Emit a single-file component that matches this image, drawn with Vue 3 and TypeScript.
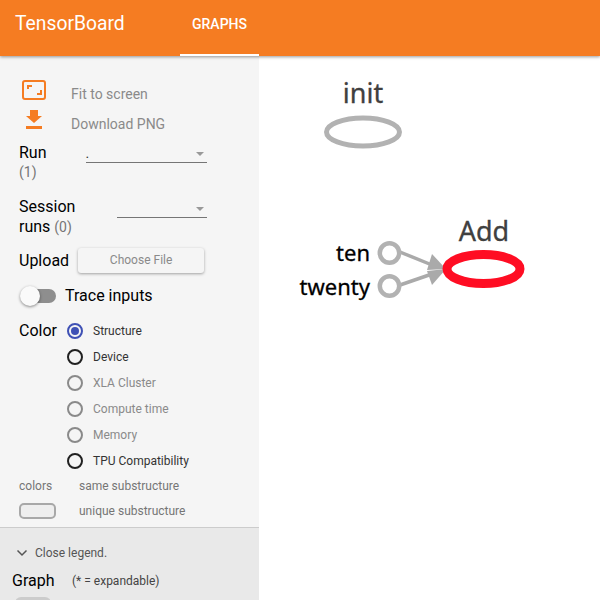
<script setup lang="ts">
interface ColorOption { label: string; state: "checked" | "on" | "off" }
const colorOptions: ColorOption[] = [
  { label: "Structure", state: "checked" },
  { label: "Device", state: "on" },
  { label: "XLA Cluster", state: "off" },
  { label: "Compute time", state: "off" },
  { label: "Memory", state: "off" },
  { label: "TPU Compatibility", state: "on" },
];
</script>

<template>
  <div class="app">
    <header class="toolbar">
      <div class="brand">TensorBoard</div>
      <div class="tab">GRAPHS</div>
    </header>
    <div class="main">
      <aside class="sidebar">
        <div class="controls">
          <div class="action">
            <svg class="ic" width="28" height="24" viewBox="0 0 28 24">
              <rect x="3" y="3" width="22" height="18" rx="2" fill="none" stroke="#f57c22" stroke-width="2" />
              <path d="M8 11V8h4M21 12v4h-4" fill="none" stroke="#f57c22" stroke-width="2" />
            </svg>
            <span>Fit to screen</span>
          </div>
          <div class="action">
            <svg class="ic" width="28" height="24" viewBox="0 0 28 24">
              <path d="M10 2h8v6h4l-8 7-8-7h4zM6 18h16v3H6z" fill="#f57c22" />
            </svg>
            <span>Download PNG</span>
          </div>
          <div class="row run">
            <div class="lbl">Run<div class="count">(1)</div></div>
            <div class="select s1"><span>.</span><i></i></div>
          </div>
          <div class="row session">
            <div class="lbl">Session<br />runs <span class="count">(0)</span></div>
            <div class="select s2"><span></span><i></i></div>
          </div>
          <div class="row upload">
            <div class="lbl">Upload</div>
            <div class="btn">Choose File</div>
          </div>
          <div class="row trace">
            <div class="toggle"><div class="track"></div><div class="knob"></div></div>
            <div class="lbl">Trace inputs</div>
          </div>
          <div class="row color">
            <div class="lbl">Color</div>
            <div class="radios">
              <div v-for="o in colorOptions" :key="o.label" class="radio" :class="o.state">
                <span class="dot"></span><span>{{ o.label }}</span>
              </div>
            </div>
          </div>
          <div class="key">
            <span class="k1">colors</span><span>same substructure</span>
          </div>
          <div class="key second">
            <span class="k1"><span class="pill"></span></span><span>unique substructure</span>
          </div>
        </div>
        <div class="legend">
          <div class="close">
            <svg width="12" height="8" viewBox="0 0 12 8"><path d="M1.500 1.500L6 6l4.500-4.500" fill="none" stroke="#555" stroke-width="1.500" /></svg>
            <span>Close legend.</span>
          </div>
          <div class="ghead"><span class="g">Graph</span><span class="exp">(* = expandable)</span></div>
          <div class="stub"></div>
        </div>
      </aside>
      <div class="canvas">
        <svg width="341" height="544" viewBox="259 56 341 544">
          <g text-anchor="middle">
            <text x="363" y="103" class="big">init</text>
            <text x="484" y="241" class="big">Add</text>
          </g>
          <ellipse cx="363" cy="132" rx="36.500" ry="14" fill="#fff" stroke="#b2b2b2" stroke-width="5" />
          <text x="370" y="261" text-anchor="end" class="small">ten</text>
          <text x="370" y="295" text-anchor="end" class="small">twenty</text>
          <line x1="400" y1="252" x2="432" y2="265" stroke="#aaa" stroke-width="3.500" />
          <line x1="400" y1="285" x2="432" y2="274" stroke="#aaa" stroke-width="3.500" />
          <path d="M432 254L446 269 427 270z" fill="#aaa" />
          <path d="M427 271L446 269 432 285z" fill="#aaa" />
          <circle cx="389.500" cy="253" r="9.700" fill="#fff" stroke="#b2b2b2" stroke-width="4.500" />
          <circle cx="389.500" cy="286" r="9.700" fill="#fff" stroke="#b2b2b2" stroke-width="4.500" />
          <ellipse cx="483.500" cy="269" rx="36.500" ry="14.500" fill="#fff" stroke="#ff0d23" stroke-width="9" />
        </svg>
      </div>
    </div>
  </div>
</template>

<style>
html, body { margin: 0; overflow: hidden; }
</style>

<style scoped>
.app { width: 600px; height: 600px; display: flex; flex-direction: column; overflow: hidden;
  font-family: Roboto, "Liberation Sans", sans-serif; background: #fff; }
.toolbar { flex: none; height: 56px; background: #f57c22; color: #fff; display: flex; align-items: stretch;
  box-shadow: 0 1px 3px rgba(0, 0, 0, 0.4); position: relative; z-index: 2; }
.brand { font-size: 19.300px; line-height: 48px; margin-left: 15px; width: 165px; }
.tab { width: 79px; box-sizing: border-box; text-align: center; font-size: 14px; font-weight: 500; line-height: 49px;
  border-bottom: 2px solid #fff; }
.main { flex: 1; min-height: 0; display: flex; }
.sidebar { flex: none; width: 259px; background: #f5f5f5; display: flex; flex-direction: column; overflow: hidden; }
.controls { flex: 1; padding: 23px 0 0 19px; box-sizing: border-box; }
.action { display: flex; align-items: center; height: 30px; font-size: 14px; color: #8a8a8a; }
.action .ic { position: relative; top: -4px; margin-left: 1px; margin-right: 23px; flex: none; }
.row { display: flex; font-size: 16px; color: #000; }
.lbl { line-height: 20px; }
.count { font-size: 14px; color: #757575; }
.run { margin-top: 4px; height: 46px; }
.run .count { line-height: 19px; }
.select { border-bottom: 1px solid #757575; position: relative; font-size: 14px; color: #333; }
.select i { position: absolute; right: 3px; bottom: 6px; border: 4px solid transparent; border-top: 4px solid #999; border-bottom: none; }
.s1 { width: 121px; height: 18px; margin-left: 39px; line-height: 18px; margin-top: 1px; }
.s2 { width: 90px; height: 20px; margin-left: 42px; }
.session { margin-top: 8px; }
.upload { margin-top: 11px; align-items: center; }
.btn { width: 126px; height: 25px; line-height: 25px; margin-left: 9px; text-align: center; background: #f5f5f5;
  border-radius: 3px; font-size: 12px; color: #8a8a8a; box-shadow: 0 1px 3px rgba(0, 0, 0, 0.35); }
.trace { margin-top: 11px; align-items: center; height: 24px; }
.toggle { width: 37px; height: 20px; position: relative; margin-right: 9px; flex: none; }
.track { position: absolute; left: 2px; right: 0; top: 3px; height: 14px; border-radius: 7px; background: #8e8e8e; }
.knob { position: absolute; left: 1px; top: 0; width: 20px; height: 20px; border-radius: 50%; background: #fafafa;
  box-shadow: 0 1px 3px rgba(0, 0, 0, 0.45); }
.color { margin-top: 12px; }
.color > .lbl { width: 48px; line-height: 22px; }
.radio { display: flex; align-items: center; height: 26px; font-size: 12px; color: #333; }
.radio .dot { width: 12px; height: 12px; border: 2px solid #212121; border-radius: 50%; margin-right: 10px; position: relative; flex: none; }
.radio.off { color: #8a8a8a; }
.radio.off .dot { border-color: #8a8a8a; }
.radio.checked .dot { border-color: #3f51b5; }
.radio.checked .dot::after { content: ""; position: absolute; inset: 2px; border-radius: 50%; background: #3f51b5; }
.radios { margin-top: -2px; }
.key { display: flex; font-size: 12px; color: #757575; line-height: 14px; margin-top: 5px; }
.key.second { margin-top: 10px; align-items: center; }
.k1 { width: 60px; flex: none; }
.pill { display: block; width: 33px; height: 12px; border: 2px solid #a8a8a8; border-radius: 5px; background: #eee; }
.legend { flex: none; height: 73px; box-sizing: border-box; background: #e9e9e9; border-top: 1px solid #ccc; overflow: hidden; }
.close { display: flex; align-items: center; font-size: 12px; color: #555; margin: 18px 0 0 16px; line-height: 14px; }
.close svg { margin-right: 7px; }
.ghead { display: flex; align-items: center; margin: 11px 0 0 12px; color: #000; }
.g { font-size: 16px; width: 60px; }
.exp { font-size: 12px; color: #444; }
.stub { width: 36px; height: 12px; margin: 7px 0 0 15px; border-radius: 6px; background: #ccc; }
.canvas { flex: 1; background: #fff; }
.canvas svg { display: block; }
.big { font-family: "Noto Sans", sans-serif; font-size: 27px; fill: #404040; stroke: #404040; stroke-width: 0.3px; }
.small { font-family: "Noto Sans", sans-serif; font-size: 22px; fill: #000; stroke: #000; stroke-width: 0.3px; }
</style>
